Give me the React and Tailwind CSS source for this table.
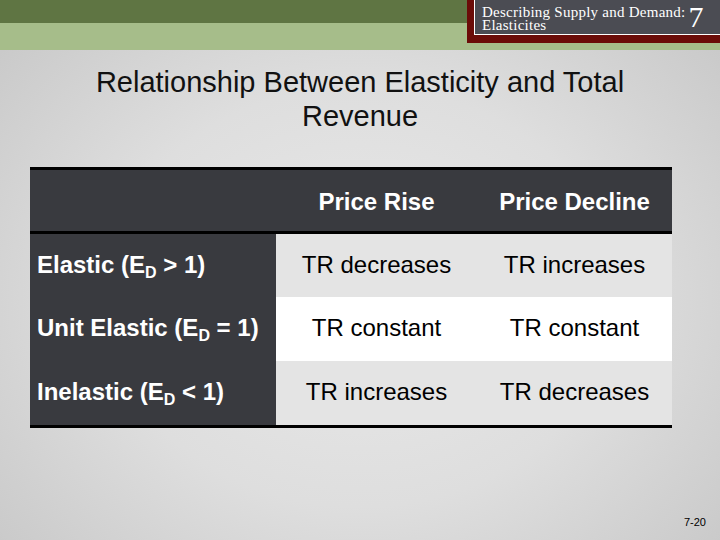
import React from "react";

const arial = { fontFamily: '"Liberation Sans", Arial, sans-serif' };

function Label({ pre, post }) {
  return (
    <span>
      {pre}E<sub className="text-[16px] relative top-[5px]">D</sub>{post}
    </span>
  );
}

export default function App() {
  const rows = [
    { label: <Label pre="Elastic (" post=" > 1)" />, a: "TR decreases", b: "TR increases", bg: "bg-[#e4e4e4]" },
    { label: <Label pre="Unit Elastic (" post=" = 1)" />, a: "TR constant", b: "TR constant", bg: "bg-white" },
    { label: <Label pre="Inelastic (" post=" < 1)" />, a: "TR increases", b: "TR decreases", bg: "bg-[#e4e4e4]" },
  ];
  return (
    <div
      className="relative w-[720px] h-[540px] overflow-hidden bg-[radial-gradient(ellipse_at_50%_55%,#e9e9e9_0%,#dedede_50%,#c6c6c6_100%)]"
      style={arial}
    >
      {/* top bands */}
      <div className="flex flex-col">
        <div className="h-[23px] bg-[#5f7543]" />
        <div className="h-[27px] bg-[#a6bd8a]" />
      </div>

      {/* chapter box */}
      <div className="absolute top-0 right-0 w-[253px] h-[43px] bg-[#6b0c08] pl-[7px] pb-[8px]">
        <div className="h-full border-l border-b border-white bg-[#4b4c53] flex items-start pl-[7px]">
          <div
            className="text-white text-[15px] tracking-[0.25px] pt-[5px]"
            style={{ fontFamily: '"Liberation Serif", "Times New Roman", serif' }}
          >
            <div className="leading-[14px] h-[13px]">Describing Supply and Demand:</div>
            <div className="leading-[14px] h-[14px]">Elasticites</div>
          </div>
          <div
            className="text-white text-[30px] leading-[30px] ml-[3px] mt-[2px]"
            style={{ fontFamily: '"Liberation Serif", "Times New Roman", serif' }}
          >
            7
          </div>
        </div>
      </div>

      {/* title */}
      <div className="pt-[15px] text-center text-[29px] leading-[34px] text-[#111]">
        Relationship Between Elasticity and Total
        <br />
        Revenue
      </div>

      {/* table */}
      <div className="ml-[30px] mt-[34px] w-[642px] border-t-[3px] border-b-[3px] border-black">
        <div className="grid grid-cols-[246px_201px_195px] h-[64px] bg-[#393a3f] border-b-[3px] border-black text-white text-[24px] font-bold">
          <div />
          <div className="flex items-center justify-center pt-[2px]">Price Rise</div>
          <div className="flex items-center justify-center pt-[2px]">Price Decline</div>
        </div>
        {rows.map((r, i) => (
          <div
            key={i}
            className={`grid grid-cols-[246px_201px_195px] ${i === 0 ? "h-[63px]" : "h-[64px]"}`}
          >
            <div className="bg-[#393a3f] text-white font-bold text-[24px] flex items-center pl-[7px] pb-[2px]">
              {r.label}
            </div>
            <div className={`${r.bg} text-black text-[24px] flex items-center justify-center pb-[2px]`}>{r.a}</div>
            <div className={`${r.bg} text-black text-[24px] flex items-center justify-center pb-[2px]`}>{r.b}</div>
          </div>
        ))}
      </div>

      {/* page number */}
      <div className="absolute right-[14px] bottom-[10px] text-[11px] text-black">7-20</div>
    </div>
  );
}
